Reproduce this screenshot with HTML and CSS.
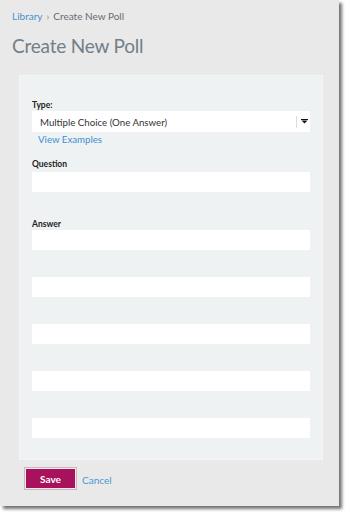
FILE: index.html
```html
<!DOCTYPE html>
<html>
<head>
<meta charset="utf-8">
<link rel="stylesheet" href="styles.css">
</head>
<body>
<div class="screen">
  <div class="crumbs"><a class="crumb-link">Library</a><span class="sep">›</span><span class="crumb-current">Create New Poll</span></div>
  <h1 class="title">Create New Poll</h1>
  <div class="panel">
    <div class="label">Type:</div>
    <div class="select">
      <span class="select-text">Multiple Choice (One Answer)</span>
      <span class="select-divider"></span>
      <svg class="select-arrow" width="7" height="5" viewBox="0 0 7 5"><rect x="0" y="0" width="7" height="1" fill="#111"/><path d="M0.5 1.5 H6.5 L3.5 4.5 Z" fill="#111"/></svg>
    </div>
    <a class="examples">View Examples</a>
    <div class="label q-label">Question</div>
    <div class="input"></div>
    <div class="label a-label">Answer</div>
    <div class="answers">
      <div class="input"></div>
      <div class="input"></div>
      <div class="input"></div>
      <div class="input"></div>
      <div class="input"></div>
    </div>
  </div>
  <div class="actions">
    <button class="save">Save</button>
    <a class="cancel">Cancel</a>
  </div>
</div>
</body>
</html>
```
FILE: styles.css
```css
html, body {
  margin: 0;
  padding: 0;
  background: #ffffff;
}
body {
  width: 350px;
  height: 516px;
  overflow: hidden;
  font-family: Lato, "Open Sans", sans-serif;
}
.screen {
  width: 339px;
  height: 506px;
  background: #e9e9e9;
  box-shadow: 3px 3px 3px rgba(0, 0, 0, 0.55);
  box-sizing: border-box;
  padding-top: 9px;
  display: flex;
  flex-direction: column;
}
.crumbs {
  margin-left: 12px;
  font-size: 10px;
  line-height: 14px;
  color: #666d73;
  display: flex;
  align-items: center;
}
.crumb-link {
  color: #4a8fcf;
}
.sep {
  margin: 0 4px;
  color: #888;
}
.title {
  margin: 10px 0 0 12px;
  font-size: 19px;
  line-height: 26px;
  font-weight: 400;
  color: #717f8a;
  letter-spacing: -0.2px;
}
.panel {
  margin: 16px 0 0 19px;
  width: 304px;
  height: 385px;
  box-sizing: border-box;
  background: #eef2f3;
  border: 1px solid #f3f6f7;
  padding: 23px 12px 0 12px;
  display: flex;
  flex-direction: column;
}
.label {
  font-size: 8.5px;
  line-height: 12px;
  font-weight: 700;
  color: #222;
  margin-bottom: 0;
}
.select {
  height: 21px;
  background: #fff;
  display: flex;
  align-items: center;
  padding-left: 8px;
  font-size: 9.7px;
  color: #333;
}
.select-text {
  flex: 1;
}
.select-divider {
  width: 1px;
  height: 12px;
  background: linear-gradient(to right, #ccc, #eee);
  margin-right: 4px;
}
.select-arrow {
  margin-right: 2px;
}
.examples {
  font-size: 9.7px;
  line-height: 14px;
  color: #3d8fd1;
  margin-left: 6px;
}
.q-label {
  margin-top: 12px;
  margin-bottom: 2px;
}
.input {
  height: 20px;
  background: #fff;
}
.a-label {
  margin-top: 26px;
  margin-bottom: 0;
}
.answers {
  display: flex;
  flex-direction: column;
  gap: 27px;
}
.actions {
  margin: 8px 0 0 25px;
  display: flex;
  align-items: center;
  gap: 6px;
}
.save {
  width: 51px;
  height: 21px;
  background: #a8125d;
  border: 1px solid #f5e9ef;
  outline: 1px solid #c9b8c0;
  color: #fff;
  font-family: Lato, "Open Sans", sans-serif;
  font-size: 10px;
  font-weight: 700;
  padding: 0;
}
.cancel {
  font-size: 10px;
  color: #4a98d6;
  margin-top: 2px;
}
```
